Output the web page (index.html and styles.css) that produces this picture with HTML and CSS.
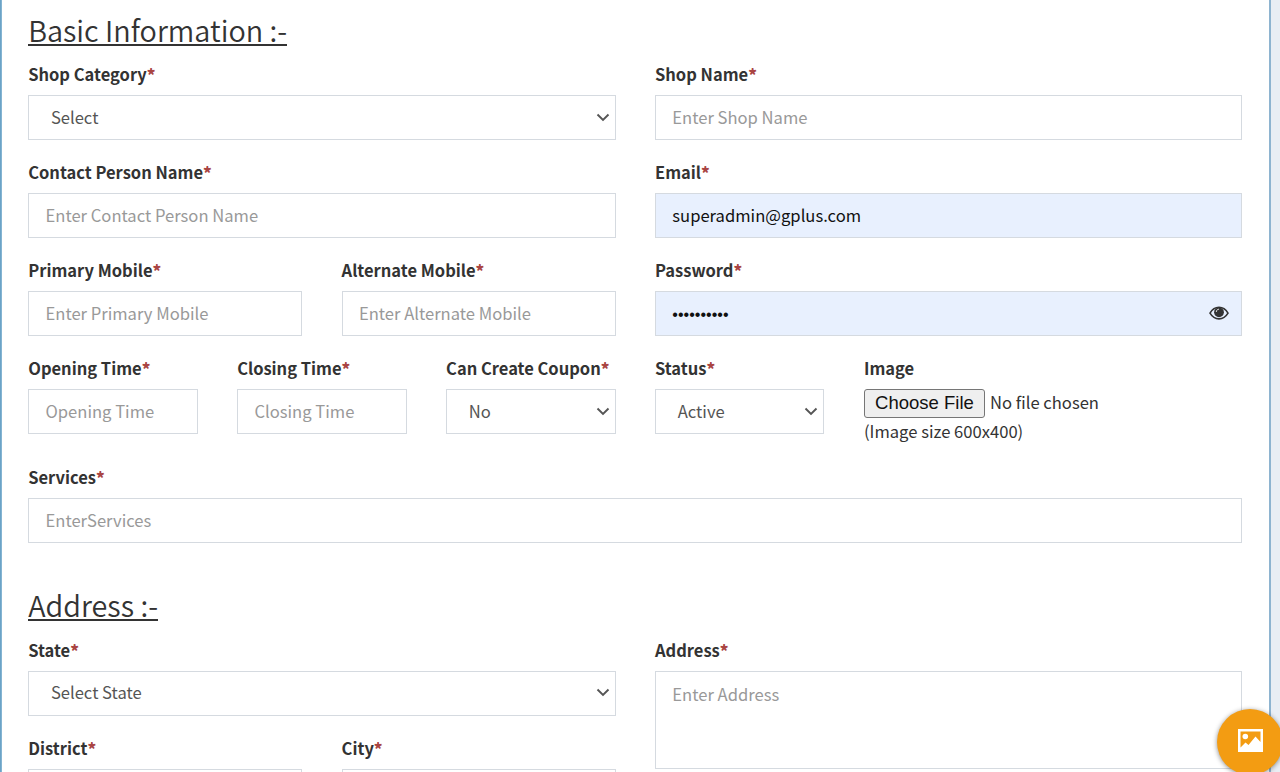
FILE: index.html
```html
<!DOCTYPE html>
<html lang="en">
<head>
<meta charset="utf-8">
<title>Shop</title>
<link rel="stylesheet" href="styles.css">
</head>
<body>
<form class="panel">
  <h2 class="title"><span class="title-text">Basic Information :-</span></h2>
  <div class="row">
    <div class="field half"><label class="label">Shop Category<b class="req">*</b></label>
      <div class="control select"><span>Select</span><svg class="chevron" viewBox="0 0 14 9"><path d="M1.500 1.500 7 7l5.500-5.500"/></svg></div></div>
    <div class="field half"><label class="label">Shop Name<b class="req">*</b></label>
      <input class="control" placeholder="Enter Shop Name"></div>
    <div class="field half"><label class="label">Contact Person Name<b class="req">*</b></label>
      <input class="control" placeholder="Enter Contact Person Name"></div>
    <div class="field half"><label class="label">Email<b class="req">*</b></label>
      <input class="control filled" value="superadmin@gplus.com"></div>
    <div class="field quarter"><label class="label">Primary Mobile<b class="req">*</b></label>
      <input class="control" placeholder="Enter Primary Mobile"></div>
    <div class="field quarter"><label class="label">Alternate Mobile<b class="req">*</b></label>
      <input class="control" placeholder="Enter Alternate Mobile"></div>
    <div class="field half"><label class="label">Password<b class="req">*</b></label>
      <div class="control filled password"><span class="dots">••••••••••</span>
        <svg class="eye" viewBox="0 0 20 14"><path class="eye-line" d="M1 7.200C5.500-.7 14.500-.7 19 7.200 14.500 14.700 5.500 14.700 1 7.200Z"/><circle cx="10" cy="6.300" r="4.900"/><path class="eye-shine" d="M7.300 6C7.300 4.300 8.400 3.200 10 3.200"/></svg></div></div>
    <div class="field sixth"><label class="label">Opening Time<b class="req">*</b></label>
      <input class="control" placeholder="Opening Time"></div>
    <div class="field sixth"><label class="label">Closing Time<b class="req">*</b></label>
      <input class="control" placeholder="Closing Time"></div>
    <div class="field sixth"><label class="label">Can Create Coupon<b class="req">*</b></label>
      <div class="control select"><span>No</span><svg class="chevron" viewBox="0 0 14 9"><path d="M1.500 1.500 7 7l5.500-5.500"/></svg></div></div>
    <div class="field sixth"><label class="label">Status<b class="req">*</b></label>
      <div class="control select"><span>Active</span><svg class="chevron" viewBox="0 0 14 9"><path d="M1.500 1.500 7 7l5.500-5.500"/></svg></div></div>
    <div class="field third"><label class="label">Image</label>
      <div class="file"><button type="button" class="choose">Choose File</button><span class="file-name">No file chosen</span></div>
      <div class="hint">(Image size 600x400)</div></div>
    <div class="field full"><label class="label">Services<b class="req">*</b></label>
      <input class="control" placeholder="EnterServices"></div>
  </div>
  <h2 class="title second"><span class="title-text">Address :-</span></h2>
  <div class="row">
    <div class="field half"><label class="label">State<b class="req">*</b></label>
      <div class="control select"><span>Select State</span><svg class="chevron" viewBox="0 0 14 9"><path d="M1.500 1.500 7 7l5.500-5.500"/></svg></div></div>
    <div class="field half tall"><label class="label">Address<b class="req">*</b></label>
      <textarea class="control area" placeholder="Enter Address"></textarea></div>
    <div class="field quarter"><label class="label">District<b class="req">*</b></label>
      <input class="control"></div>
    <div class="field quarter"><label class="label">City<b class="req">*</b></label>
      <input class="control"></div>
  </div>
</form>
<button type="button" class="fab"><svg class="picture" viewBox="0 0 25 23"><path fill-rule="evenodd" d="M0 0h25v23H0ZM2.500 2.500v16l5-5 3 2.500 7-8.500 5 5.500V2.500Z"/><circle cx="7.300" cy="7.500" r="2.800"/></svg></button>
</body>
</html>
```
FILE: styles.css
```css
* { box-sizing: border-box; }
body {
  margin: 0;
  height: 772px;
  overflow: hidden;
  background: #e9eef4;
  color: #333;
  font-family: "Noto Sans CJK SC", "Noto Sans", sans-serif;
  font-size: 16.6px;
}
.panel {
  width: 1271px;
  height: 772px;
  overflow: hidden;
  padding: 11px 26.7px 0 27.2px;
  background: #fff;
  border-left: 1px solid #6ba3c7;
  border-right: 2px solid #8eb4d0;
  box-shadow: inset 1px 0 #84b4d2;
}
.title {
  margin: 0 0 14px;
  height: 36px;
  line-height: 36px;
  font-size: 28.8px;
  font-weight: 350;
}
.title-text {
  display: inline-block;
  height: 35px;
  line-height: 37px;
  border-bottom: 2.5px solid #333;
}
.second { margin-top: 44px; margin-bottom: 14.3px; }
.row {
  display: grid;
  grid-template-columns: repeat(12, minmax(0, 1fr));
  column-gap: 39.5px;
  row-gap: 20.1px;
}
.half { grid-column: span 6; }
.quarter { grid-column: span 3; }
.sixth { grid-column: span 2; }
.third { grid-column: span 4; }
.full { grid-column: span 12; }
.tall { grid-row: span 2; }
.label {
  display: block;
  height: 24px;
  margin-bottom: 10px;
  line-height: 26px;
  font-size: 16.5px;
  font-weight: 700;
  white-space: nowrap;
}
.req { color: #a94442; }
.control {
  display: block;
  width: 100%;
  height: 45px;
  margin: 0 0 -1px;
  padding: 0 16.3px 2px;
  border: 1px solid #d5dae0;
  border-radius: 0;
  outline: none;
  background: #fff;
  color: #555;
  font: inherit;
  line-height: 42px;
}
.control::placeholder { color: #999; opacity: 1; }
.filled { background: #e8f0fe; color: #111; }
.select, .password { display: flex; align-items: center; justify-content: space-between; }
.select { padding: 0 5px 0 21.7px; line-height: 40px; }
.select span { padding-bottom: 2px; }
.chevron { width: 14px; height: 9px; margin-bottom: 1px; fill: none; stroke: #555; stroke-width: 1.9; }
.dots { font-family: "Liberation Sans", sans-serif; font-size: 16.1px; }
.password { padding-right: 12px; padding-bottom: 0; }
.eye { width: 20px; height: 14px; margin-bottom: 2px; fill: #333; }
.eye-line { fill: none; stroke: #333; stroke-width: 1.6; }
.eye-shine { fill: none; stroke: #ddd; stroke-width: 1; }
.area { height: 98px; line-height: 24px; padding-top: 10px; resize: none; }
.file { display: flex; align-items: center; gap: 5px; height: 29px; }
.file-name { line-height: 27px; padding-bottom: 2px; }
.choose {
  width: 121px;
  height: 29px;
  padding: 0 0 1px;
  border: 1px solid #767676;
  border-radius: 3px;
  background: #efefef;
  color: #111;
  font: 18.5px "Liberation Sans", sans-serif;
}
.hint { height: 26px; line-height: 27px; }
.fab {
  position: absolute;
  left: 1217px;
  top: 709px;
  width: 66px;
  height: 66px;
  padding: 0;
  border: 0;
  border-radius: 50%;
  background: #f39c12;
  box-shadow: 0 1px 5px rgba(0, 0, 0, .45);
}
.picture { display: block; width: 25px; height: 23px; margin: -3px auto 0; fill: #fff; }
```
